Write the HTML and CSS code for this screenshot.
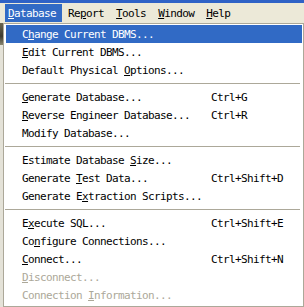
FILE: index.html
```html
<!DOCTYPE html>
<html>
<head>
<meta charset="utf-8">
<link rel="stylesheet" href="styles.css">
</head>
<body>
<div class="titlebar"></div>
<div class="menubar">
  <span class="mb-item active"><u>D</u>atabase</span>
  <span class="mb-item">Re<u>p</u>ort</span>
  <span class="mb-item"><u>T</u>ools</span>
  <span class="mb-item"><u>W</u>indow</span>
  <span class="mb-item"><u>H</u>elp</span>
</div>
<div class="below">
  <div class="under"><div class="under-icon"></div></div>
  <div class="menu">
    <div class="item hl"><span>C<u>h</u>ange Current DBMS...</span><span></span></div>
    <div class="item"><span><u>E</u>dit Current DBMS...</span><span></span></div>
    <div class="item"><span>Default Physical <u>O</u>ptions...</span><span></span></div>
    <div class="sep"></div>
    <div class="item"><span><u>G</u>enerate Database...</span><span>Ctrl+G</span></div>
    <div class="item"><span><u>R</u>everse Engineer Database...</span><span>Ctrl+R</span></div>
    <div class="item"><span>Modify Database...</span><span></span></div>
    <div class="sep"></div>
    <div class="item"><span>Estimate Database <u>S</u>ize...</span><span></span></div>
    <div class="item"><span>Generate <u>T</u>est Data...</span><span>Ctrl+Shift+D</span></div>
    <div class="item"><span>Generate E<u>x</u>traction Scripts...</span><span></span></div>
    <div class="sep"></div>
    <div class="item"><span>E<u>x</u>ecute SQL...</span><span>Ctrl+Shift+E</span></div>
    <div class="item"><span>Co<u>n</u>figure Connections...</span><span></span></div>
    <div class="item"><span><u>C</u>onnect...</span><span>Ctrl+Shift+N</span></div>
    <div class="item dis"><span><u>D</u>isconnect...</span><span></span></div>
    <div class="item dis"><span>Connection <u>I</u>nformation...</span><span></span></div>
  </div>
</div>
</body>
</html>
```

FILE: styles.css
```css
html, body {
  margin: 0;
  padding: 0;
}
body {
  width: 304px;
  height: 307px;
  overflow: hidden;
  background: #ece9d8;
  font-family: "DejaVu Sans Mono", "Liberation Mono", monospace;
  font-size: 11px;
  letter-spacing: -0.62px;
  color: #000;
}
u {
  text-decoration: underline;
  text-underline-offset: 1px;
}
.titlebar {
  height: 3px;
  background: #2f62c6;
}
.menubar {
  height: 20px;
  display: flex;
  align-items: stretch;
  padding-left: 2px;
  background: #ece9d8;
}
.mb-item {
  display: flex;
  align-items: center;
  padding: 0 6px;
}
.mb-item.active {
  background: #316ac5;
  color: #fff;
  margin: 1px 0 1px 3px;
  padding: 0 6px 0 3px;
}
.below {
  display: flex;
}
.under {
  width: 3px;
  height: 284px;
  background: #e4e2d8;
  border-right: 0;
}
.under-icon {
  height: 22px;
  background: linear-gradient(#6b6650, #3c3a30 60%, #8a8670);
}
.menu {
  width: 298px;
  border: 1px solid #aca899;
  background: #fff;
  padding: 1px;
}
.item {
  display: grid;
  grid-template-columns: 189px auto;
  height: 18px;
  align-items: center;
  padding-left: 16px;
  margin-left: 1px;
}
.item.hl {
  background: #316ac5;
  color: #fff;
}
.item.dis {
  color: #aca899;
}
.sep {
  height: 9px;
  display: flex;
  align-items: center;
}
.sep::before {
  content: "";
  display: block;
  width: 295px;
  height: 1px;
  background: #aca899;
}
```
